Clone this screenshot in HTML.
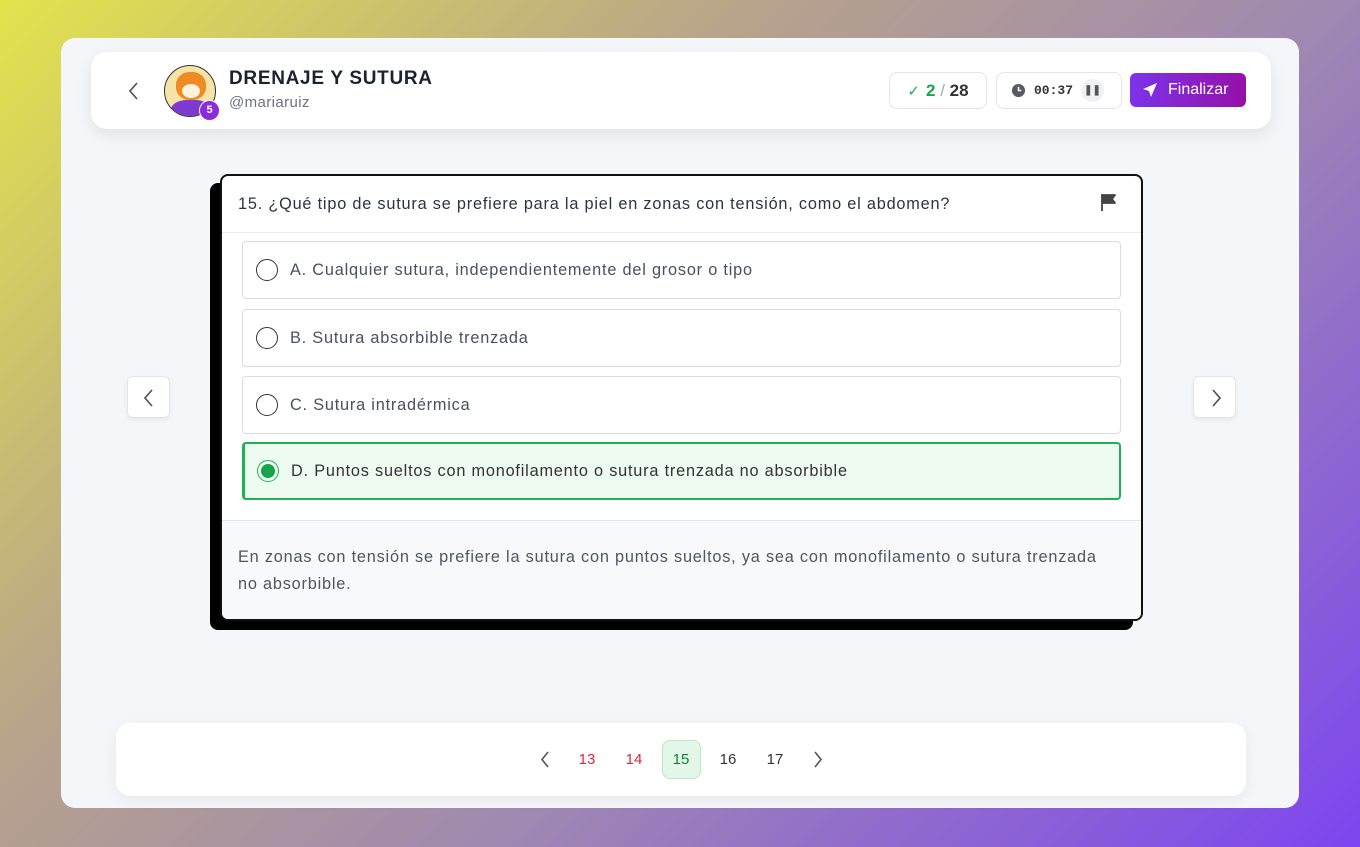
<!DOCTYPE html>
<html><head><meta charset="utf-8"><style>
*{box-sizing:border-box;margin:0;padding:0}
body{width:1360px;height:847px;overflow:hidden;font-family:"Liberation Sans",sans-serif;background:linear-gradient(135deg,#e3e34c 0%,#b7a28c 35%,#a08ab0 60%,#7d45f0 100%);position:relative}
.outer{position:absolute;left:61px;top:38px;width:1238px;height:770px;background:#f5f6fa;border-radius:14px}
.hdr{position:absolute;left:91px;top:52px;width:1180px;height:77px;background:#fff;border-radius:16px;box-shadow:0 6px 16px rgba(0,0,0,.08)}
.abs{position:absolute}
.pill{position:absolute;top:72px;height:37px;border:1.5px solid #e3e5e9;border-radius:8px;background:#fff;display:flex;align-items:center}
.card{position:absolute;left:220px;top:174px;width:923px;height:447px;background:#fff;border:2px solid #111;border-radius:8px;box-shadow:-10px 9px 0 #000;overflow:hidden}
.t{font-size:16.3px;letter-spacing:.8px;white-space:nowrap}
.q{position:absolute;left:16px;top:19px;color:#2d3340}
.opt{position:absolute;left:20px;width:879px;height:58px;border:1px solid #d9dce1;border-radius:4px;display:flex;align-items:center;color:#4a5060}
.rad{width:22px;height:22px;border:1.6px solid #333;border-radius:50%;margin:0 12px 0 13px;flex:none}
.expl{position:absolute;left:0;top:344px;width:100%;height:101px;background:#f8f9fb;border-top:1.5px solid #e4e6ea;padding:23px 16px;line-height:27px;color:#4f5563}
.nav{position:absolute;top:376px;width:43px;height:42px;background:#fff;border:1px solid #e4e6ea;border-radius:6px;box-shadow:0 2px 4px rgba(0,0,0,.06)}
.pb{position:absolute;left:116px;top:723px;width:1130px;height:73px;background:#fff;border-radius:14px;box-shadow:0 4px 14px rgba(0,0,0,.06)}
.pg{position:absolute;top:751px;font-size:15px;width:38px;text-align:center}
</style></head><body>
<div class="outer"></div>
<div class="hdr"></div>
<svg class="abs" style="left:127px;top:81px" width="14" height="20" viewBox="0 0 14 20"><path d="M10 2L3 10l7 8" stroke="#555" stroke-width="1.7" fill="none"/></svg>
<div class="abs" style="left:164px;top:65px;width:52px;height:52px;border-radius:50%;background:#f6e3a6;border:1px solid #333;overflow:hidden">
<div class="abs" style="left:11px;top:6px;width:30px;height:28px;border-radius:45%;background:#f08a24"></div>
<div class="abs" style="left:17px;top:18px;width:18px;height:14px;border-radius:50%;background:#fff3df"></div>
<div class="abs" style="left:6px;top:34px;width:40px;height:24px;border-radius:40% 40% 0 0;background:#7c3ad0"></div></div>
<div class="abs" style="left:199px;top:100px;width:21px;height:21px;border-radius:50%;background:#8b2be0;border:1.5px solid #fff;color:#fff;font-size:11px;font-weight:bold;text-align:center;line-height:18px">5</div>
<div class="abs" style="left:229px;top:68px;font-size:19px;font-weight:bold;color:#1d2230;letter-spacing:.7px">DRENAJE Y SUTURA</div>
<div class="abs" style="left:229px;top:94px;font-size:15px;color:#6b7280;letter-spacing:.4px">@mariaruiz</div>
<div class="pill" style="left:889px;width:98px;justify-content:center;gap:6px"><span style="color:#22b055;font-size:15px">✓</span><span style="font-size:17px;font-weight:bold"><span style="color:#16a34a">2</span><span style="color:#aaa;font-weight:normal"> / </span><span style="color:#333">28</span></span></div>
<div class="pill" style="left:996px;width:126px"><svg style="margin-left:14px" width="15" height="15" viewBox="0 0 16 16"><circle cx="8" cy="8" r="7" fill="#555a63"/><path d="M8 4v4h3" stroke="#fff" stroke-width="1.6" fill="none"/></svg><span style="font-family:'Liberation Mono',monospace;font-weight:bold;font-size:13px;color:#333;margin-left:8px">00:37</span><span style="margin-left:8px;width:23px;height:23px;border-radius:50%;background:#f0f1f3;color:#555;font-size:10px;text-align:center;line-height:23px;font-weight:bold">❚❚</span></div>
<div class="abs" style="left:1130px;top:73px;width:116px;height:34px;border-radius:6px;background:linear-gradient(90deg,#7b33ea,#9610a8);color:#fff;font-size:16px;display:flex;align-items:center"><svg style="margin:0 10px 0 12px" width="16" height="16" viewBox="0 0 16 16"><path d="M15 1L1 7l6 2 2 6z" fill="#fff"/></svg>Finalizar</div>

<div class="card">
<div class="q t">15. ¿Qué tipo de sutura se prefiere para la piel en zonas con tensión, como el abdomen?</div>
<svg class="abs" style="left:877px;top:16px" width="20" height="20" viewBox="0 0 20 20"><path d="M3 2v17M3 3h13l-3 4 3 4H3" fill="#444" stroke="#444" stroke-width="1.8" stroke-linejoin="round"/></svg>
<div class="abs" style="left:0;top:56px;width:100%;border-top:1px solid #ebedf0"></div>
<div class="opt t" style="top:65px"><div class="rad"></div>A. Cualquier sutura, independientemente del grosor o tipo</div>
<div class="opt t" style="top:133px"><div class="rad"></div>B. Sutura absorbible trenzada</div>
<div class="opt t" style="top:200px"><div class="rad"></div>C. Sutura intradérmica</div>
<div class="opt t" style="top:266px;background:#edfbf1;border:2px solid #22b055;border-left-width:3px;color:#333"><div class="rad" style="border-color:#22b055;border-width:1.2px;display:flex;align-items:center;justify-content:center;margin-left:12px"><div style="width:14px;height:14px;border-radius:50%;background:#16a34a"></div></div>D. Puntos sueltos con monofilamento o sutura trenzada no absorbible</div>
<div class="expl t">En zonas con tensión se prefiere la sutura con puntos sueltos, ya sea con monofilamento o sutura trenzada<br>no absorbible.</div>
</div>

<div class="nav" style="left:127px"><svg style="margin:12px 0 0 14px" width="14" height="18" viewBox="0 0 14 18"><path d="M10 1L3 9l7 8" stroke="#555" stroke-width="1.7" fill="none"/></svg></div>
<div class="nav" style="left:1193px"><svg style="margin:12px 0 0 15px" width="14" height="18" viewBox="0 0 14 18"><path d="M4 1l7 8-7 8" stroke="#555" stroke-width="1.7" fill="none"/></svg></div>

<div class="pb"></div>
<svg class="abs" style="left:539px;top:751px" width="12" height="17" viewBox="0 0 12 17"><path d="M9 1L3 8.5 9 16" stroke="#555" stroke-width="1.6" fill="none"/></svg>
<div class="pg" style="left:568px;color:#e0283a">13</div>
<div class="pg" style="left:615px;color:#e0283a">14</div>
<div class="abs" style="left:662px;top:740px;width:39px;height:39px;border-radius:8px;background:#e3f7e9;border:1.5px solid #b7e9c6"></div>
<div class="pg" style="left:662px;color:#15803d">15</div>
<div class="pg" style="left:709px;color:#333">16</div>
<div class="pg" style="left:756px;color:#333">17</div>
<svg class="abs" style="left:812px;top:751px" width="12" height="17" viewBox="0 0 12 17"><path d="M3 1l6 7.5L3 16" stroke="#555" stroke-width="1.6" fill="none"/></svg>
</body></html>
